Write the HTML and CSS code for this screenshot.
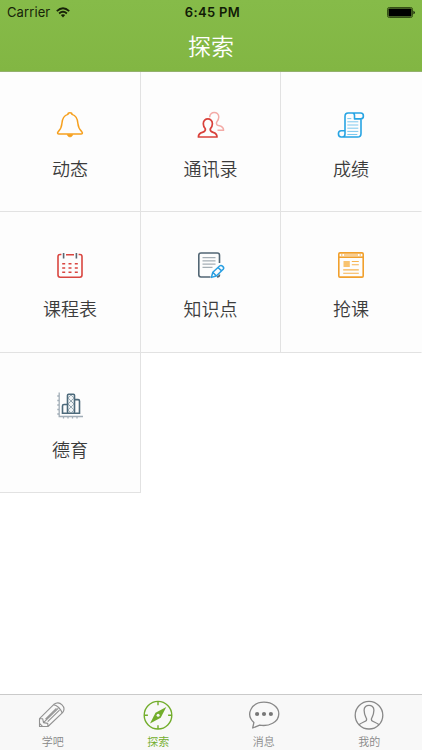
FILE: index.html
```html
<!DOCTYPE html>
<html lang="zh-CN">
<head>
<meta charset="utf-8">
<title>探索</title>
<link rel="stylesheet" href="styles.css">
</head>
<body>
<header class="header">
  <div class="status">
    <div class="carrier"><span>Carrier</span>
      <svg class="wifi" width="14" height="11" viewBox="0 0 14 11" fill="none" stroke="#172308" stroke-width="1.8"><path d="M.8 4.1Q7-1.7 13.2 4.1M3.1 6.5Q7 3 10.9 6.5"/><path d="M4.8 8.1Q7 6.3 9.2 8.1L7 10.4Z" fill="#172308" stroke="none"/></svg>
    </div>
    <div class="time">6:45 PM</div>
    <div class="power"><svg width="28" height="11" viewBox="0 0 28 11"><rect x=".5" y=".5" width="25" height="10" rx="1.8" fill="none" stroke="#365016"/><rect x="1.5" y="1.5" width="23" height="8" rx=".8"/><path d="M26.5 3.7q1.2.4 1.2 1.8t-1.2 1.8z"/></svg></div>
  </div>
  <h1 class="title">探索</h1>
</header>
<main class="grid">
  <a class="cell">
    <svg class="icon" viewBox="0 0 30 30" fill="none" stroke="#f6a01e" stroke-width="1.5" stroke-linejoin="round"><path d="M12.9 4.4C12.9 2.3 17 2.3 17 4.4C21.2 5.6 22.6 9 22.9 13.5C23.2 17.8 25 20 26.9 21.9C28 23.1 27.2 24 26 24H4C2.7 24 2 23 3.1 21.9C5 20 6.6 17.8 6.9 13.5C7.2 9 8.8 5.6 12.9 4.4Z"/><path d="M12.2 24.5h5.6c-.2 3.3-5.4 3.3-5.6 0Z" fill="#f6a01e" stroke-width=".5"/></svg>
    <span>动态</span>
  </a>
  <a class="cell">
    <svg class="icon" viewBox="0 0 30 30" fill="none" stroke-width="1.5" stroke-linejoin="round"><path stroke="#f3aaa6" d="M13.7 7.2C13.6 1 22.7 1 22.8 7.1C22.8 9.6 21.6 10.9 20.6 12.2C20 14.7 21 15.1 23.5 15.8C26.6 16.6 27.6 17.7 27.6 20.3H21.5"/><path stroke="#d9403a" stroke-width="1.7" d="M7.3 13.8C7.3 7.3 16.4 7.3 16.4 13.8C16.4 16.1 15.4 17.7 14.3 18.8C13.7 21.1 15 21.8 17.1 22.4C20 23.2 21 24.6 21 27H2.4C2.4 24.6 3.5 23.2 6.4 22.4C8.5 21.8 9.9 21.1 9.3 18.8C8.3 17.7 7.3 16.1 7.3 13.8Z"/></svg>
    <span>通讯录</span>
  </a>
  <a class="cell">
    <svg class="icon" viewBox="0 0 30 30" fill="none" stroke="#27a4e3" stroke-width="1.6" stroke-linejoin="round"><path d="M24.7 3H12.1C10 3 9 4.3 9 6.4V20.5M24.7 3C28.3 3 28.3 8.9 24.7 8.9H18.5V5.6C18.5 4.2 17.8 3 16.5 3M25 9V23.4C25 25.8 23.9 27 21.6 27H5.2C1.5 27 1.5 20.7 5.2 20.7H9V24C9 25.8 7.8 27 6.2 27"/><path stroke="#7cc8ee" stroke-width="1" d="M11.3 8.6h4M11.3 11.8h11M11.3 15h11M11.3 18.2h11M11.3 21.4h11M11.3 24.5h10"/></svg>
    <span>成绩</span>
  </a>
  <a class="cell">
    <svg class="icon" viewBox="0 0 30 30" fill="none" stroke="#d94640" stroke-width="1.6"><path d="M6.4 4.5H5Q3 4.5 3 6.5V25Q3 27.2 5.2 27.2H24.8Q27 27.2 27 25V6.5Q27 4.5 25 4.5H23.6M11 4.8h8"/><path stroke="#596873" d="M8.6 3v5.5M21.4 3v5.5"/><path stroke-dasharray="3 3.3" d="M7.2 13.8h16M7.2 18h16M7.2 22.2h16"/></svg>
    <span>课程表</span>
  </a>
  <a class="cell">
    <svg class="icon" viewBox="0 0 30 30" fill="none" stroke="#526674" stroke-width="1.6" stroke-linejoin="round"><path d="M14.5 27H5Q2.8 27 2.8 24.8V5.2Q2.8 3 5 3H21.3Q23.5 3 23.5 5.2V13M23.5 24.5Q23.5 27 21 27"/><path stroke="#8f9ba3" stroke-width="1" d="M6.5 7.7h13M6.5 10.9h13M6.5 14.1h13M6.5 17.3h10"/><path stroke="#299fe2" stroke-width="1.5" d="M15.4 27.4L16.8 22.2L23.6 16C25.6 14.4 28.8 17.4 27.2 19.2L20.3 26ZM16.8 22.2L20.3 26M22 17.5L25.6 20.9"/></svg>
    <span>知识点</span>
  </a>
  <a class="cell">
    <svg class="icon" viewBox="0 0 30 30" fill="none" stroke="#f1a02d" stroke-width="1.6"><rect x="2.8" y="2.9" width="24.4" height="24.2" rx="1.2"/><path d="M3 7.2h24"/><path stroke-width="1.2" d="M5 5h1.5M8 5h14M23.5 5H25"/><rect x="7.5" y="11" width="6.3" height="6" fill="#f8c36f" stroke="none"/><path stroke="#f6b34f" stroke-width="1.1" d="M15.8 11.5h7M15.8 14.7h7M7.2 19.9h15.6M7.2 23.2h15.6"/></svg>
    <span>抢课</span>
  </a>
  <a class="cell">
    <svg class="icon" viewBox="0 0 30 30" fill="none" stroke="#4d6a7b" stroke-width="1.6"><path stroke="#a1adb7" stroke-width="1.3" d="M4.2 2.5V26.5H28M2.3 6h2M2.3 10.5h2M2.3 15h2M2.3 19.5h2M2.3 24h2M8.5 26v2.5M13 26v2.5M17.5 26v2.5M22 26v2.5"/><path d="M12.5 14.5H9Q7.5 14.5 7.5 16V23.2H24.5V11Q24.5 9.6 23.1 9.6H20"/><rect x="12.5" y="4.3" width="7" height="18.9" rx="1" fill="#eef2f4"/><path stroke="#8799a4" stroke-width=".8" d="M13 8l3-3 3 3-6 6 6 6-3 3-3-3 6-6-6-6M16 11l3 3M16 17l-3-3"/></svg>
    <span>德育</span>
  </a>
</main>
<nav class="tabs">
  <a class="tab">
    <svg class="tab-icon pencil" viewBox="0 0 32 32" fill="none" stroke="#929292" stroke-width="1.1" stroke-linejoin="round"><path d="M4.5 27.5V19.7L18.9 5.3C25 1 31.6 8.3 27.6 13.6L13 27.5ZM4.5 19.7L7.7 19.8L8.5 23.6L12.7 24.4L13 27.5M8.5 23.6L23.2 9.3M18.3 5.8C22 6 26 10 27.1 14.2M10.5 20.2L21.4 9.4M12.7 22.6L24.5 11.2M4.6 24.4L7.5 27.4"/></svg>
    <span>学吧</span>
  </a>
  <a class="tab active">
    <svg class="tab-icon" viewBox="0 0 32 32" fill="none" stroke="#72ad2c" stroke-width="1.4"><circle cx="16" cy="16.2" r="13.8"/><path d="M16 2.5v3.7M16 26.2v3.7M2.2 16.2h3.7M26.1 16.2h3.7"/><path d="M24.3 8L18.7 18.8L8 24.5L13.5 13.7Z" fill="#72ad2c" stroke="none"/><circle cx="16.1" cy="16.2" r="1.5" fill="#f8f8f8" stroke="none"/></svg>
    <span>探索</span>
  </a>
  <a class="tab">
    <svg class="tab-icon" viewBox="0 0 32 32" fill="none" stroke="#888" stroke-width="1.3" stroke-linejoin="round"><path d="M4.7 29L5.9 23.4C-3.1 15.1 3.8 3.2 16 3.2C24.2 3.2 30.8 8 30.8 14.7C30.8 23.2 20.8 27.8 11.7 26.1Z"/><g fill="#777" stroke="none"><circle cx="9.1" cy="15" r="2.1"/><circle cx="16" cy="15" r="2.1"/><circle cx="22.9" cy="15" r="2.1"/></g></svg>
    <span>消息</span>
  </a>
  <a class="tab">
    <svg class="tab-icon" viewBox="0 0 32 32" fill="none" stroke="#888" stroke-width="1.3"><circle cx="16" cy="16.2" r="13.8"/><path d="M6 25.7C7.8 23.8 12 22.9 13.4 21.5C14.1 20.2 13.4 19 12.6 17.7C11.6 16.2 11.3 14.2 11.1 11.3C10.9 4.7 21.1 4.7 20.9 11.3C20.7 14.2 20.4 16.2 19.4 17.7C18.6 19 17.9 20.2 18.6 21.5C20 22.9 24.2 23.8 26 25.7"/></svg>
    <span>我的</span>
  </a>
</nav>
</body>
</html>
```
FILE: styles.css
```css
* { box-sizing: border-box; }
body {
  margin: 0;
  width: 422px;
  height: 750px;
  display: flex;
  flex-direction: column;
  background: #fff;
  font-family: Inter, "Noto Sans CJK SC", sans-serif;
  overflow: hidden;
}
.header {
  height: 72px;
  background: linear-gradient(#86bb49, #82b643);
  border-bottom: 1px solid #93b16d;
}
.status {
  display: grid;
  grid-template-columns: 1fr 1fr 1fr;
  align-items: center;
  height: 24px;
  padding: 0 7px;
  font-size: 13px;
  line-height: 24px;
  color: #172308;
}
.carrier { display: flex; align-items: center; gap: 6px; letter-spacing: .1px; }
.time { padding-left: 3px; text-align: center; font-weight: 600; letter-spacing: .35px; white-space: nowrap; color: #111b06; }
.power { display: flex; justify-content: flex-end; }
.title {
  margin: 0;
  padding-top: 1px;
  font-size: 23px;
  font-weight: 350;
  line-height: 44px;
  text-align: center;
  color: #fff;
}
.grid {
  flex: 1;
  display: grid;
  grid-template-columns: 141px 140px 141px;
  grid-template-rows: 140px 141px 140px;
  align-content: start;
}
.cell {
  display: flex;
  flex-direction: column;
  align-items: center;
  padding-top: 38px;
  background: #fdfdfd;
  border-right: 1px solid #e2e2e2;
  border-bottom: 1px solid #e2e2e2;
  color: #3c3c3c;
  font-size: 18px;
  font-weight: 350;
  line-height: 26px;
}
.cell:nth-child(3n) { border-right-color: transparent; }
.cell:last-child { padding-top: 37px; }
.icon { width: 30px; height: 30px; margin-bottom: 17px; }
.cell:last-child .icon { margin-bottom: 18px; }
.tabs {
  height: 56px;
  display: grid;
  grid-template-columns: repeat(4, 1fr);
  background: #f8f8f8;
  border-top: 1px solid #cacaca;
}
.tab {
  display: flex;
  flex-direction: column;
  align-items: center;
  padding-top: 4px;
  font-size: 11px;
  font-weight: 350;
  line-height: 16px;
  color: #888;
}
.tab-icon { width: 32px; height: 32px; margin-bottom: 3px; }
.pencil { margin-right: 3px; }
.active { color: #72ad2c; }
```
